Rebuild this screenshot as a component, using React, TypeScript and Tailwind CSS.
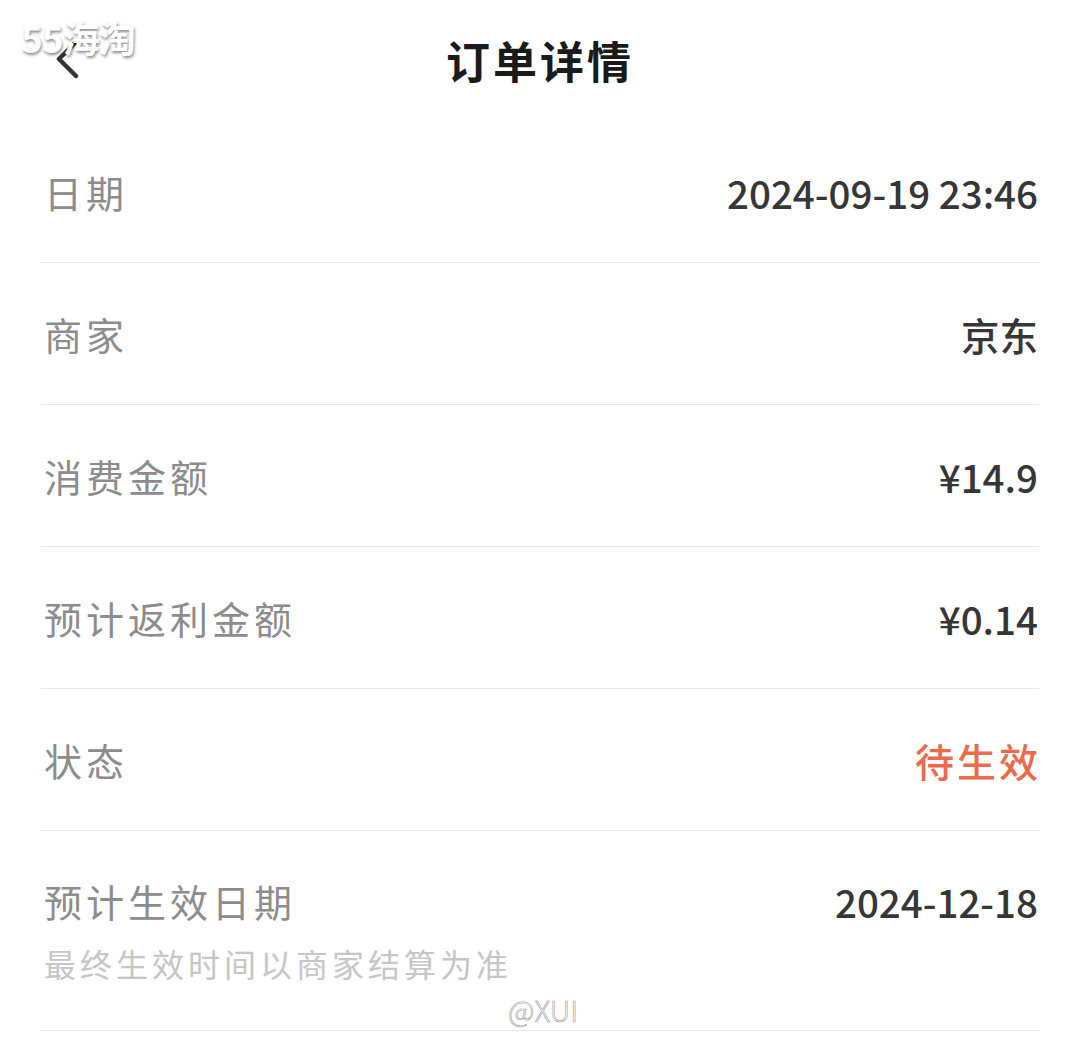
import { FC } from 'react';

type Row = {
  label: string;
  value: string;
  tone?: 'normal' | 'warn';
  note?: string;
};

const rows: Row[] = [
  { label: '日期', value: '2024-09-19 23:46' },
  { label: '商家', value: '京东' },
  { label: '消费金额', value: '¥14.9' },
  { label: '预计返利金额', value: '¥0.14' },
  { label: '状态', value: '待生效', tone: 'warn' },
  { label: '预计生效日期', value: '2024-12-18', note: '最终生效时间以商家结算为准' },
];

const font = "font-['Noto_Sans_CJK_SC','Noto_Sans',sans-serif]";

const BackIcon: FC = () => (
  <svg width="28" height="44" viewBox="0 0 28 44" fill="none" className="block">
    <path d="M20 4 L3 21 L20 38" stroke="#333" strokeWidth="4.5" strokeLinecap="round" strokeLinejoin="round" />
  </svg>
);

const DetailRow: FC<{ row: Row }> = ({ row }) => (
  <li
    className={`flex flex-col justify-center border-b border-[#e6e6e6] pl-[3px] pr-[1px] ${
      row.note ? 'h-[200px] pb-[2px]' : 'h-[142px]'
    }`}
  >
    <div className="flex items-center justify-between">
      <span className="text-[38px] leading-[52px] tracking-[4px] text-[#8c8c8c]">{row.label}</span>
      <span
        className={`font-medium leading-[52px] ${
          row.tone === 'warn'
            ? 'mr-[-3px] text-[39px] tracking-[3px] text-[#eb6a4b]'
            : 'text-[38.5px] text-[#363636]'
        }`}
      >
        {row.value}
      </span>
    </div>
    {row.note && (
      <p className="mt-[14px] text-[32px] leading-[44px] tracking-[4px] text-[#c6c6c6]">{row.note}</p>
    )}
  </li>
);

export default function App() {
  return (
    <div className={`relative h-[1053px] w-[1080px] overflow-hidden bg-white ${font}`}>
      <header className="relative flex h-[121px] items-center justify-center pb-[2px]">
        <div className="absolute left-[56px] top-[38px]">
          <BackIcon />
        </div>
        <h1 className="text-[44px] font-bold leading-none tracking-[3px] text-[#1a1a1a]">订单详情</h1>
      </header>

      <ul className="mx-[41px]">
        {rows.map((row) => (
          <DetailRow key={row.label} row={row} />
        ))}
      </ul>

      {/* watermarks */}
      <span className="absolute left-[21px] top-[19px] text-[37px] font-bold leading-none tracking-[-1px] text-white [text-shadow:1px_2px_3px_rgba(0,0,0,0.45)]">
        55海淘
      </span>
      <span className="absolute left-[508px] top-[995px] text-[29px] font-light leading-none text-white [-webkit-text-stroke:0.6px_#9a9a9a]">
        @XUI
      </span>
    </div>
  );
}
